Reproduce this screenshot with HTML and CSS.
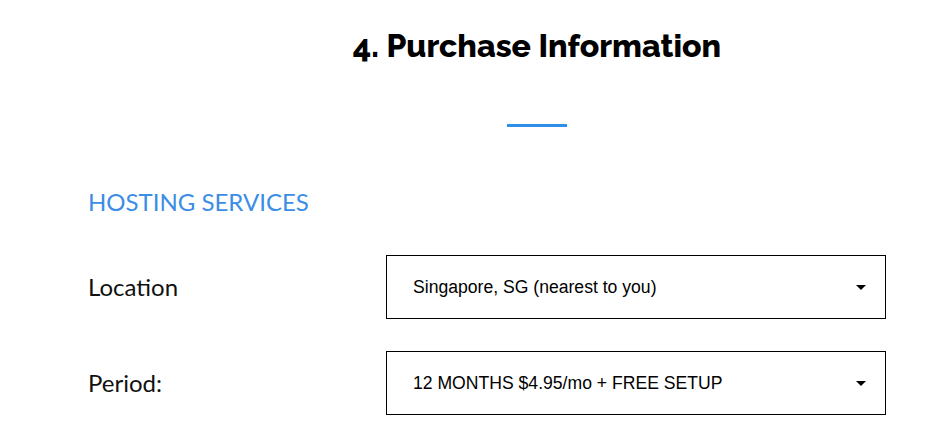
FILE: index.html
```html
<!DOCTYPE html>
<html lang="en">
<head>
<meta charset="utf-8">
<title>Purchase Information</title>
<link rel="stylesheet" href="styles.css">
</head>
<body>
<section class="purchase">
  <header class="purchase-head">
    <h1 class="purchase-title">4. Purchase Information</h1>
    <div class="purchase-rule"></div>
  </header>
  <h2 class="group-title">HOSTING SERVICES</h2>
  <div class="field-row">
    <label class="field-label">Location</label>
    <div class="select-box">
      <span class="select-value">Singapore, SG (nearest to you)</span>
      <span class="select-caret"></span>
    </div>
  </div>
  <div class="field-row">
    <label class="field-label">Period:</label>
    <div class="select-box">
      <span class="select-value">12 MONTHS $4.95/mo + FREE SETUP</span>
      <span class="select-caret"></span>
    </div>
  </div>
</section>
</body>
</html>
```
FILE: styles.css
```css
html, body {
  margin: 0;
  padding: 0;
  background: #ffffff;
}

.purchase {
  padding: 0 0 0 88px;
}

.purchase-head {
  display: flex;
  flex-direction: column;
  align-items: center;
  margin-left: 36px;
  padding-top: 27px;
}

.purchase-title {
  margin: 0;
  font-family: "Raleway", "Lato", "Noto Sans", sans-serif;
  font-weight: 800;
  font-size: 32px;
  line-height: 38px;
  color: #000;
}

.purchase-rule {
  width: 60px;
  height: 3px;
  background: #2f8ee9;
  margin-top: 59px;
}

.group-title {
  margin: 60px 0 0 0;
  font-family: "Lato", sans-serif;
  font-weight: 400;
  font-size: 24px;
  line-height: 30px;
  color: #3b8de6;
}

.field-row {
  display: flex;
  align-items: center;
  margin-top: 38px;
}

.field-row + .field-row {
  margin-top: 32px;
}

.field-label {
  width: 298px;
  font-family: "Lato", sans-serif;
  font-size: 24px;
  color: #111;
  padding-bottom: 2px;
}

.select-box {
  flex: 0 0 auto;
  box-sizing: border-box;
  width: 500px;
  height: 64px;
  border: 1px solid #000;
  display: flex;
  align-items: center;
  padding: 0 19px 0 26px;
}

.select-value {
  flex: 1;
  font-family: "Liberation Sans", Arial, sans-serif;
  font-size: 17.6px;
  color: #000;
}

.select-caret {
  width: 0;
  height: 0;
  border-left: 5px solid transparent;
  border-right: 5px solid transparent;
  border-top: 5px solid #000;
}
```
